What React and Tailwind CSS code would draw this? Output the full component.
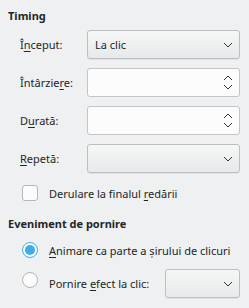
import React from "react";

const Chevron = ({ up }) => (
  <svg width="10" height="6" viewBox="0 0 10 6" className="block">
    <polyline
      points={up ? "1,5 5,1 9,5" : "1,1 5,5 9,1"}
      fill="none"
      stroke="#31363b"
      strokeWidth="1"
    />
  </svg>
);

const Combo = ({ value, className = "w-[153px]" }) => (
  <div
    className={`${className} h-[29px] flex items-center justify-between pl-[7px] pr-[6px] rounded-[3px] border border-[#bcbebf] bg-gradient-to-b from-[#f5f6f6] to-[#e8e9ea] shadow-[0_1px_0_rgba(0,0,0,0.06)]`}
  >
    <span>{value}</span>
    <Chevron />
  </div>
);

const Spin = () => (
  <div className="w-[153px] h-[29px] flex items-center justify-end pr-[6px] rounded-[3px] border border-[#c3c5c6] bg-[#fcfcfc]">
    <div className="flex flex-col gap-[3px]">
      <Chevron up />
      <Chevron />
    </div>
  </div>
);

const Label = ({ before, mn, after }) => (
  <span>
    {before}
    <span className="underline underline-offset-2">{mn}</span>
    {after}
  </span>
);

export default function App() {
  return (
    <div className="w-[249px] h-[308px] bg-[#eff0f1] text-[#232627] text-[11px] leading-[15px] font-['Noto_Sans',sans-serif] overflow-hidden">
      <div className="pt-2 pl-2 font-bold">Timing</div>

      <div className="mt-[7px] pl-5 grid grid-cols-[67px_153px] gap-y-[9px] items-center">
        <Label before="Î" mn="n" after="ceput:" />
        <Combo value="La clic" />
        <Label before="Întârzie" mn="r" after="e:" />
        <Spin />
        <Label before="D" mn="u" after="rată:" />
        <Spin />
        <Label before="" mn="R" after="epetă:" />
        <Combo value="" />
      </div>

      <div className="mt-3 pl-[22px] flex items-center gap-[11px]">
        <div className="w-4 h-4 rounded-[3px] border border-[#b4b6b7] bg-[#fcfcfc]" />
        <Label before="Derulare la finalul " mn="r" after="edării" />
      </div>

      <div className="mt-[15px] pl-2 font-bold">Eveniment de pornire</div>

      <div className="mt-[11px] pl-[22px] flex items-center gap-[11px]">
        <div className="w-4 h-4 rounded-full border border-[#3daee9] bg-[#fcfcfc] flex items-center justify-center">
          <div className="w-[10px] h-[10px] rounded-full bg-[#3daee9]" />
        </div>
        <Label before="" mn="A" after="nimare ca parte a șirului de clicuri" />
      </div>

      <div className="mt-[11px] pl-[22px] flex items-center">
        <div className="self-start mt-[3px] w-4 h-4 rounded-full border border-[#b4b6b7] bg-[#fcfcfc]" />
        <span className="ml-[11px]">
          <Label before="Pornire " mn="e" after="fect la clic:" />
        </span>
        <div className="ml-auto mr-[9px]">
          <Combo value="" className="w-[75px]" />
        </div>
      </div>
    </div>
  );
}
